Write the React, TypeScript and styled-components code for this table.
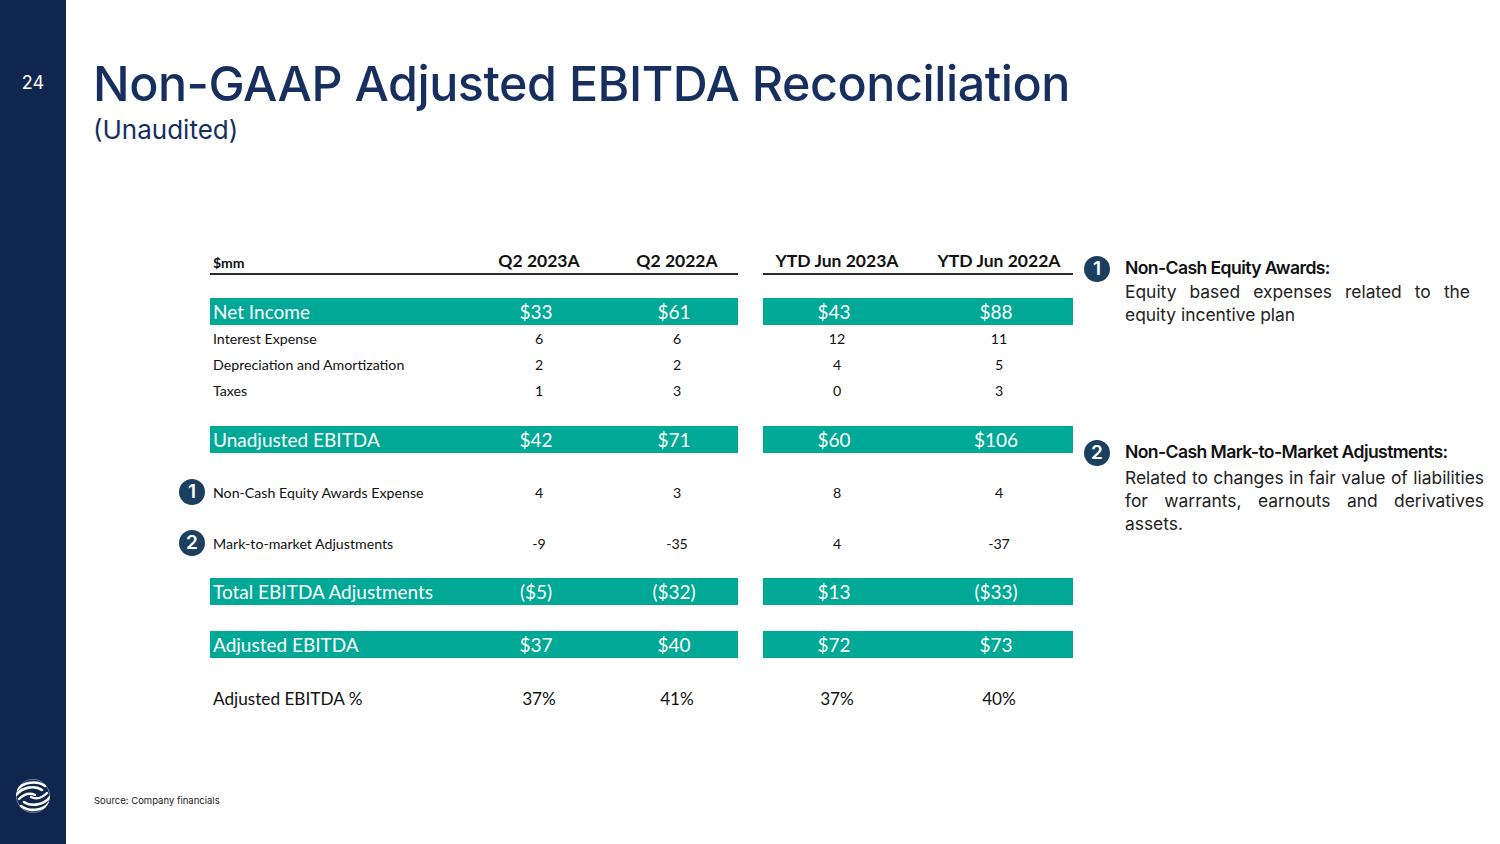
import React from "react";
import styled, { createGlobalStyle } from "styled-components";

const Global = createGlobalStyle`
  html, body { margin: 0; padding: 0; background: #fff; }
  #root { width: 1500px; height: 844px; }
`;

const NAVY = "#10264f";
const TITLE = "#172f5f";
const GREEN = "#00a896";
const BADGE = "#1b3f5e";

const Slide = styled.div`
  display: flex;
  width: 1500px;
  height: 844px;
  overflow: hidden;
  background: #fff;
`;

const Sidebar = styled.aside`
  width: 66px;
  flex: none;
  background: ${NAVY};
  display: flex;
  flex-direction: column;
  align-items: center;
  justify-content: space-between;
  padding: 72px 0 30px;
  box-sizing: border-box;
`;

const PageNum = styled.div`
  font-family: Inter, "Liberation Sans", sans-serif;
  color: #fff;
  font-size: 18px;
  line-height: 22px;
`;

const Main = styled.main`
  flex: 1;
  display: flex;
  flex-direction: column;
  padding: 59px 0 37px 27px;
  box-sizing: border-box;
`;

const Title = styled.h1`
  margin: 0;
  font-family: Inter, "Liberation Sans", sans-serif;
  font-weight: 500;
  font-size: 48.4px;
  line-height: 50px;
  color: ${TITLE};
  letter-spacing: -0.45px;
`;

const Subtitle = styled.div`
  margin-top: 8px;
  font-family: Inter, "Liberation Sans", sans-serif;
  font-size: 26px;
  line-height: 26px;
  color: ${TITLE};
`;

const Content = styled.div`
  display: flex;
  align-items: flex-start;
  margin-top: 105px;
  gap: 11px;
`;

const Table = styled.div`
  margin-left: 86px;
  display: flex;
  flex-direction: column;
  font-family: Lato, "Open Sans", sans-serif;
  color: #111;
`;

const Row = styled.div<{ $space?: number }>`
  display: flex;
  align-items: stretch;
  margin-top: ${(p) => p.$space ?? 0}px;
`;

const BadgeSlot = styled.div`
  width: 31px;
  flex: none;
  display: flex;
  align-items: center;
`;

const Badge = styled.div`
  width: 26px;
  height: 26px;
  border-radius: 50%;
  background: ${BADGE};
  color: #fff;
  font-family: Inter, "Liberation Sans", sans-serif;
  font-weight: 600;
  font-size: 19px;
  line-height: 26px;
  text-align: center;
  flex: none;
`;

type Kind = "head" | "bar" | "line" | "pct";

const heights: Record<Kind, number> = { head: 25, bar: 27, line: 26, pct: 26 };

const LeftGroup = styled.div<{ $kind: Kind }>`
  display: grid;
  grid-template-columns: 260px 138px 130px;
  align-items: center;
  height: ${(p) => heights[p.$kind]}px;
  background: ${(p) => (p.$kind === "bar" ? GREEN : "transparent")};
  border-bottom: ${(p) => (p.$kind === "head" ? "2px solid #2b2b2b" : "none")};
`;

const RightGroup = styled.div<{ $kind: Kind }>`
  display: grid;
  grid-template-columns: 148px 148px;
  column-gap: 14px;
  margin-left: 25px;
  align-items: center;
  height: ${(p) => heights[p.$kind]}px;
  background: ${(p) => (p.$kind === "bar" ? GREEN : "transparent")};
  border-bottom: ${(p) => (p.$kind === "head" ? "2px solid #2b2b2b" : "none")};
`;

const sizes: Record<Kind, number> = { head: 17.5, bar: 19, line: 14.2, pct: 17.2 };

const Label = styled.div<{ $kind: Kind }>`
  padding-left: 3px;
  white-space: nowrap;
  font-size: ${(p) => (p.$kind === "head" ? 14 : sizes[p.$kind])}px;
  font-weight: ${(p) => (p.$kind === "head" ? 700 : 400)};
  color: ${(p) => (p.$kind === "bar" ? "#fff" : "#111")};
  align-self: ${(p) => (p.$kind === "head" ? "end" : "center")};
  padding-bottom: ${(p) => (p.$kind === "head" ? "2px" : "0")};
`;

const Cell = styled.div<{ $kind: Kind; $shift?: number }>`
  text-align: center;
  white-space: nowrap;
  font-size: ${(p) => sizes[p.$kind]}px;
  font-weight: ${(p) => (p.$kind === "head" ? 700 : 400)};
  color: ${(p) => (p.$kind === "bar" ? "#fff" : "#111")};
  padding-left: ${(p) => p.$shift ?? 0}px;
  padding-right: ${(p) => (p.$kind === "bar" ? 6 : 0)}px;
`;

const Notes = styled.div`
  display: flex;
  flex-direction: column;
  margin-top: 8px;
  font-family: Inter, "Liberation Sans", sans-serif;
`;

const Note = styled.div<{ $space?: number; $width: number }>`
  display: flex;
  gap: 15px;
  margin-top: ${(p) => p.$space ?? 0}px;
  width: ${(p) => p.$width}px;
`;

const NoteText = styled.div`
  flex: 1;
  padding-top: 1px;
`;

const NoteHead = styled.div`
  font-size: 17.6px;
  font-weight: 600;
  letter-spacing: -0.6px;
  line-height: 22px;
  color: #111;
`;

const NoteBody = styled.p<{ $gap?: number }>`
  margin: ${(p) => p.$gap ?? 1}px 0 0;
  font-size: 17.4px;
  line-height: 23px;
  color: #222;
  text-align: justify;
`;

const Footer = styled.div`
  margin-top: auto;
  padding-left: 1px;
  font-family: Inter, "Liberation Sans", sans-serif;
  font-size: 9.5px;
  line-height: 12px;
  color: #222;
`;

const Logo = () => (
  <svg width="36" height="36" viewBox="0 0 36 36">
    <defs>
      <clipPath id="lc">
        <circle cx="18" cy="18" r="17" />
      </clipPath>
    </defs>
    <g clipPath="url(#lc)" fill="none" stroke="#fff" strokeLinecap="round">
      <path d="M2 12 C8 4, 22 2, 30 8" strokeWidth="2.6" />
      <path d="M1 17 C7 9, 20 7, 27 12" strokeWidth="2.6" />
      <path d="M4 21 C10 15, 16 15, 20 17" strokeWidth="2.4" />
      <path d="M16 19 C20 21, 26 21, 32 15" strokeWidth="2.4" />
      <path d="M9 24 C16 29, 29 27, 35 19" strokeWidth="2.6" />
      <path d="M6 28 C14 34, 28 33, 34 25" strokeWidth="2.6" />
    </g>
    <circle cx="18" cy="18" r="16.6" fill="none" stroke="#fff" strokeWidth="0.8" opacity="0.5" />
  </svg>
);

type Line = {
  label: string;
  kind: Kind;
  vals: string[];
  space?: number;
  badge?: string;
};

const rows: Line[] = [
  { label: "$mm", kind: "head", vals: ["Q2 2023A", "Q2 2022A", "YTD Jun 2023A", "YTD Jun 2022A"] },
  { label: "Net Income", kind: "bar", vals: ["$33", "$61", "$43", "$88"], space: 23 },
  { label: "Interest Expense", kind: "line", vals: ["6", "6", "12", "11"] },
  { label: "Depreciation and Amortization", kind: "line", vals: ["2", "2", "4", "5"] },
  { label: "Taxes", kind: "line", vals: ["1", "3", "0", "3"] },
  { label: "Unadjusted EBITDA", kind: "bar", vals: ["$42", "$71", "$60", "$106"], space: 23 },
  { label: "Non-Cash Equity Awards Expense", kind: "line", vals: ["4", "3", "8", "4"], space: 26, badge: "1" },
  { label: "Mark-to-market Adjustments", kind: "line", vals: ["-9", "-35", "4", "-37"], space: 25, badge: "2" },
  { label: "Total EBITDA Adjustments", kind: "bar", vals: ["($5)", "($32)", "$13", "($33)"], space: 22 },
  { label: "Adjusted EBITDA", kind: "bar", vals: ["$37", "$40", "$72", "$73"], space: 26 },
  { label: "Adjusted EBITDA %", kind: "pct", vals: ["37%", "41%", "37%", "40%"], space: 27 },
];

export default function App() {
  return (
    <Slide>
      <Global />
      <Sidebar>
        <PageNum>24</PageNum>
        <Logo />
      </Sidebar>
      <Main>
        <Title>Non-GAAP Adjusted EBITDA Reconciliation</Title>
        <Subtitle>(Unaudited)</Subtitle>
        <Content>
          <Table>
            {rows.map((r) => (
              <Row key={r.label} $space={r.space}>
                <BadgeSlot>{r.badge && <Badge>{r.badge}</Badge>}</BadgeSlot>
                <LeftGroup $kind={r.kind}>
                  <Label $kind={r.kind}>{r.label}</Label>
                  <Cell $kind={r.kind}>{r.vals[0]}</Cell>
                  <Cell $kind={r.kind} $shift={8}>{r.vals[1]}</Cell>
                </LeftGroup>
                <RightGroup $kind={r.kind}>
                  <Cell $kind={r.kind}>{r.vals[2]}</Cell>
                  <Cell $kind={r.kind}>{r.vals[3]}</Cell>
                </RightGroup>
              </Row>
            ))}
          </Table>
          <Notes>
            <Note $width={386}>
              <Badge>1</Badge>
              <NoteText>
                <NoteHead>Non-Cash Equity Awards:</NoteHead>
                <NoteBody>Equity based expenses related to the equity incentive plan</NoteBody>
              </NoteText>
            </Note>
            <Note $width={400} $space={114}>
              <Badge>2</Badge>
              <NoteText>
                <NoteHead>Non-Cash Mark-to-Market Adjustments:</NoteHead>
                <NoteBody $gap={3}>Related to changes in fair value of liabilities for warrants, earnouts and derivatives assets.</NoteBody>
              </NoteText>
            </Note>
          </Notes>
        </Content>
        <Footer>Source: Company financials</Footer>
      </Main>
    </Slide>
  );
}
